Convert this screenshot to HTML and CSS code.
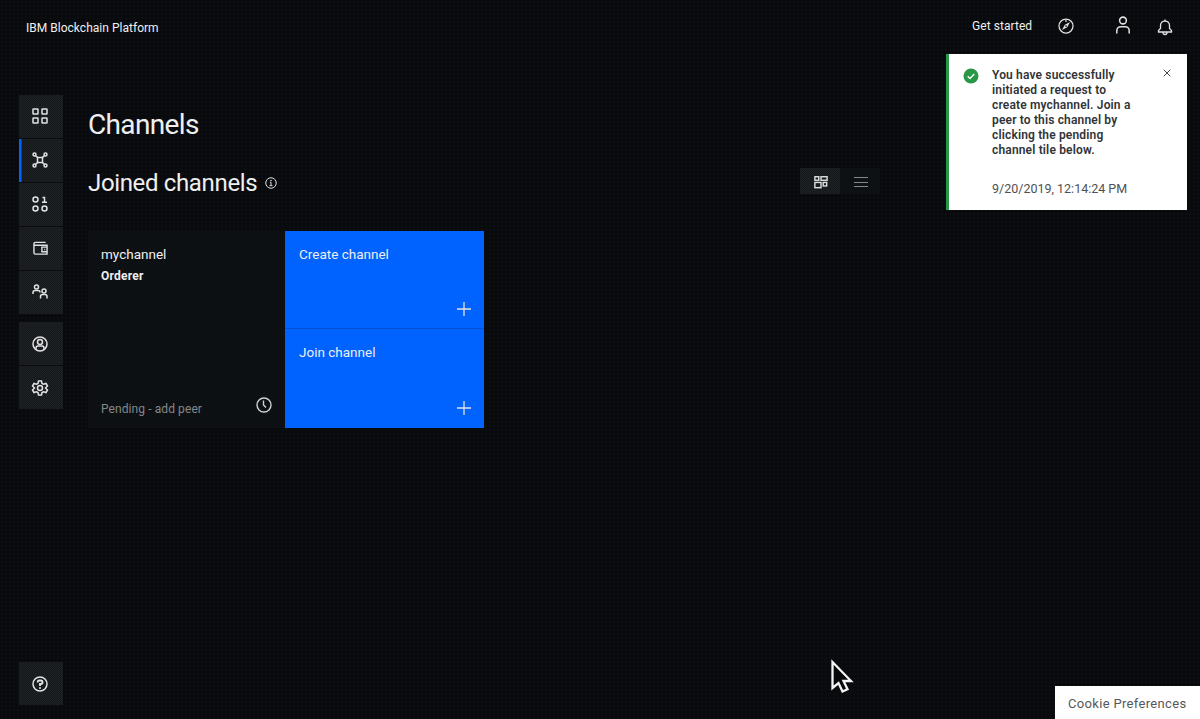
FILE: index.html
```html
<!DOCTYPE html>
<html lang="en">
<head>
<meta charset="utf-8">
<title>IBM Blockchain Platform</title>
<link rel="stylesheet" href="styles.css">
</head>
<body>
<div class="app">
  <header class="header">
    <span class="brand">IBM Blockchain Platform</span>
    <div class="header-actions">
      <span class="get-started">Get started</span>
      <svg class="icon compass" viewBox="0 0 32 32"><circle cx="16" cy="16" r="14"/><path class="solid" d="M24 8l-5.500 10.500L8 24l5.500-10.500z"/><circle class="hole" cx="16" cy="16" r="1.700"/><path d="M16 4v4"/></svg>
      <svg class="icon user" viewBox="0 0 32 32"><circle cx="16" cy="8" r="6"/><path d="M5 31v-5a7 7 0 0 1 7-7h8a7 7 0 0 1 7 7v5"/></svg>
      <svg class="icon bell" viewBox="0 0 32 32"><path d="M16 1v3M16 4a9 9 0 0 0-9 9v6l-4 4v3h26v-3l-4-4v-6a9 9 0 0 0-9-9zM12 26v1a4 4 0 0 0 8 0v-1"/></svg>
    </div>
  </header>

  <div class="body">
    <nav class="nav">
      <div class="nav-group">
        <a class="nav-item"><svg class="icon" viewBox="0 0 32 32"><rect x="2" y="2" width="10" height="10" rx="1"/><rect x="20" y="2" width="10" height="10" rx="1"/><rect x="2" y="20" width="10" height="10" rx="1"/><rect x="20" y="20" width="10" height="10" rx="1"/></svg></a>
        <a class="nav-item active"><svg class="icon" viewBox="0 0 32 32"><circle cx="5" cy="5" r="3"/><circle cx="27" cy="5" r="3"/><circle cx="5" cy="27" r="3"/><circle cx="27" cy="27" r="3"/><rect x="11" y="11" width="10" height="10"/><path d="M7 7l4 4M25 7l-4 4M7 25l4-4M25 25l-4-4"/></svg></a>
        <a class="nav-item"><svg class="icon" viewBox="0 0 32 32"><circle cx="7" cy="7" r="5"/><path d="M21 3h4v9M20 12.500h10"/><circle cx="7" cy="25" r="5"/><circle cx="25" cy="25" r="5"/></svg></a>
        <a class="nav-item"><svg class="icon wallet" viewBox="0 0 32 32"><path d="M27 3H5a3 3 0 0 0-3 3v19a3 3 0 0 0 3 3h25V9H3M30 13H19v10h11M24 18h2"/></svg></a>
        <a class="nav-item"><svg class="icon people" viewBox="0 0 32 32"><circle cx="9" cy="6" r="4"/><path d="M2 20v-3a4 4 0 0 1 4-4h6a4 4 0 0 1 4 4"/><circle cx="24" cy="14" r="4"/><path d="M17 29v-4a4 4 0 0 1 4-4h5a4 4 0 0 1 4 4v4"/></svg></a>
      </div>
      <div class="nav-group">
        <a class="nav-item"><svg class="icon" viewBox="0 0 32 32"><circle cx="16" cy="16" r="14"/><circle cx="16" cy="12" r="5"/><path d="M8 27v-3a4 4 0 0 1 4-4h8a4 4 0 0 1 4 4v3"/></svg></a>
        <a class="nav-item"><svg class="icon" viewBox="0 0 32 32"><path d="M13 2h6l1 5 3 1.500 5-1.500 3 5-4 4 4 4-3 5-5-1.500-3 1.500-1 5h-6l-1-5-3-1.500-5 1.500-3-5 4-4-4-4 3-5 5 1.500 3-1.500z"/><circle cx="16" cy="16" r="5"/></svg></a>
      </div>
      <a class="nav-item help"><svg class="icon" viewBox="0 0 32 32"><circle cx="16" cy="16" r="14"/><path class="thick" d="M11.500 13v-1a3 3 0 0 1 3-3h3a3.500 3.500 0 0 1 0 7H16v4"/><circle class="solid" cx="16" cy="24" r="2"/></svg></a>
    </nav>

    <main class="main">
      <h1 class="title">Channels</h1>
      <div class="section-head">
        <h2 class="subtitle">Joined channels</h2>
        <svg class="icon info" viewBox="0 0 32 32"><circle cx="16" cy="16" r="14"/><path d="M13 14h3v8M12 23h8"/><circle class="solid" cx="16" cy="9" r="2"/></svg>
        <div class="view-switch">
          <span class="view selected"><svg class="icon grid" viewBox="0 0 32 32"><rect x="2" y="4" width="9" height="8"/><rect x="16" y="4" width="14" height="8"/><rect x="2" y="17" width="14" height="12"/><rect x="21" y="17" width="8" height="8"/></svg></span>
          <span class="view"><svg class="icon list" viewBox="0 0 14 12"><path d="M0 1.500h14M0 6.500h14M0 10.500h14"/></svg></span>
        </div>
      </div>
      <div class="tiles">
        <article class="tile channel">
          <div class="tile-name">mychannel</div>
          <div class="tile-kind">Orderer</div>
          <div class="tile-foot">
            <span class="pending">Pending - add peer</span>
            <svg class="icon clock" viewBox="0 0 32 32"><circle cx="16" cy="16" r="14"/><path d="M15 7v9l5 5"/></svg>
          </div>
        </article>
        <div class="actions">
          <div class="tile action"><span>Create channel</span><svg class="icon plus" viewBox="0 0 14 14"><path d="M7 0v14M0 7h14"/></svg></div>
          <div class="tile action"><span>Join channel</span><svg class="icon plus" viewBox="0 0 14 14"><path d="M7 0v14M0 7h14"/></svg></div>
        </div>
      </div>
    </main>
  </div>

  <aside class="toast">
    <svg class="check" viewBox="0 0 16 16"><circle cx="8" cy="8" r="7.500"/><path d="M4.700 8.200l2.300 2.300 4.300-4.500"/></svg>
    <div class="toast-text">
      <p class="message">You have successfully<br>initiated a request to<br>create mychannel. Join a<br>peer to this channel by<br>clicking the pending<br>channel tile below.</p>
      <p class="time">9/20/2019, 12:14:24 PM</p>
    </div>
    <svg class="close" viewBox="0 0 8 8"><path d="M.7.7l6.600 6.600M7.300.7L.7 7.300"/></svg>
  </aside>
  <div class="cookies">Cookie Preferences</div>
  <svg class="cursor" viewBox="0 0 24 36"><path d="M2.500 3v26l6-5 4 8.500 5-2.300-4-8.200h7.500z"/></svg>
</div>
</body>
</html>
```
FILE: styles.css
```css
* { box-sizing: border-box; }
body { margin: 0; }
h1, h2, p { margin: 0; font-weight: 400; }

.app {
  position: relative;
  display: flex;
  flex-direction: column;
  width: 1200px;
  height: 719px;
  overflow: hidden;
  color: #eeeff0;
  font-family: Roboto, "Noto Sans", sans-serif;
  font-size: 12px;
  background: #090a0d radial-gradient(circle, #0f1114 0.5px, transparent 1px) 0 0 / 4px 4px;
}

.icon { display: block; width: 16px; height: 16px; fill: none; stroke: #e0e2e3; stroke-width: 3; overflow: visible; flex: none; }
.icon .solid { fill: #e0e2e3; stroke: none; }
.icon .hole { fill: #090a0d; stroke: none; }
.icon .thick { stroke-width: 3.8; }

.header { display: flex; align-items: flex-start; justify-content: space-between; height: 94px; padding: 0 27px 0 26px; flex: none; }
.brand { margin-top: 20px; line-height: 16px; letter-spacing: 0.02px; }
.header-actions { display: flex; align-items: flex-start; }
.get-started { width: 61px; margin: 18px 25px 0 0; line-height: 16px; letter-spacing: 0.06px; white-space: nowrap; }
.header .compass { margin: 18px 40px 0 0; stroke-width: 2.5; }
.header .user { width: 18px; height: 18px; margin: 16px 25px 0 0; stroke-width: 2.7; }
.header .bell { margin-top: 19px; stroke-width: 2.6; }

.body { display: flex; flex: 1; }
.nav { display: flex; flex-direction: column; width: 44px; margin-left: 19px; padding: 1px 0 14px; }
.nav-group { display: flex; flex-direction: column; gap: 1px; margin-bottom: 8px; }
.nav-item { display: flex; align-items: center; justify-content: center; height: 43px; padding: 0 2px 0 0; background: #171a1d repeating-conic-gradient(#1d2124 0 25%, #15191c 0 50%) 0 0 / 2px 2px; }
.nav-group:first-child .nav-item { padding-bottom: 1px; }
.nav-group + .nav-group .nav-item { padding-top: 1px; }
.nav-item.active { box-shadow: inset 2.5px 0 #0062ff; }
.help { margin-top: auto; padding-top: 1px; }
.nav .wallet { width: 15px; height: 15px; }

.main { width: 792px; margin-left: 25px; }
.title { margin-top: 13px; font-size: 28px; line-height: 36px; letter-spacing: -0.65px; }
.section-head { display: flex; align-items: center; height: 32px; margin-top: 24px; }
.subtitle { font-size: 24px; line-height: 32px; letter-spacing: -0.35px; }
.icon.info { width: 12px; height: 12px; margin-left: 8px; stroke-width: 2.6; }
.view-switch { display: flex; margin: -4px 0 0 auto; }
.view { display: flex; align-items: center; justify-content: center; width: 40px; height: 26px; padding: 2px 0 0 1px; background: #0d1013 repeating-conic-gradient(#111417 0 25%, #0b0e11 0 50%) 0 0 / 2px 2px; }
.view.selected { background: #171a1d repeating-conic-gradient(#1d2124 0 25%, #15191c 0 50%) 0 0 / 2px 2px; }
.icon.grid { width: 14px; height: 14px; stroke-width: 3.2; }
.icon.list { width: 14px; height: 12px; stroke: #85888a; stroke-width: 1; }

.tiles { display: flex; margin-top: 32px; }
.tile { display: flex; padding: 13px; font-size: 13.500px; }
.channel { flex-direction: column; width: 197px; height: 197px; background: #0c0f12 repeating-conic-gradient(#101417 0 25%, #0a0d10 0 50%) 0 0 / 2px 2px; }
.tile-name { line-height: 20px; }
.tile-kind { margin-top: 4px; font-size: 12px; font-weight: 700; line-height: 16px; letter-spacing: 0.25px; }
.tile-foot { display: flex; justify-content: space-between; align-items: flex-end; margin-top: auto; margin-bottom: -2px; font-size: 12px; color: #85888a; }
.pending { line-height: 16px; letter-spacing: 0.09px; }
.channel .clock { margin-bottom: 4px; stroke: #cfd1d2; stroke-width: 2.8; }
.actions { display: flex; flex-direction: column; gap: 1px; width: 199px; height: 197px; background: #0750d2; }
.action { height: 97px; justify-content: space-between; background: #0062ff; line-height: 20px; padding-left: 14px; }
.action + .action { height: 99px; }
.icon.plus { width: 14px; height: 14px; margin-bottom: -1px; stroke-width: 1.3; align-self: flex-end; }
.action + .action .plus { margin-bottom: 0; }

.toast { position: absolute; top: 54px; left: 946px; display: flex; align-items: flex-start; width: 241px; height: 156px; padding: 14px 16px 0 14px; color: #303437; background: #fff; border-left: 3px solid #2a9648; }
.check { width: 16px; height: 16px; flex: none; }
.check circle { fill: #2a9648; }
.check path { fill: none; stroke: #fff; stroke-width: 1.3; }
.toast-text { margin-left: 13px; white-space: nowrap; flex: 1; }
.message { font-size: 12px; font-weight: 600; line-height: 15px; letter-spacing: 0.16px; }
.time { margin-top: 22px; color: #4e5153; font-size: 12.500px; line-height: 18px; }
.close { width: 8px; height: 8px; margin-top: 1px; fill: none; stroke: #45484a; stroke-width: 1; }
.cookies { position: absolute; right: 0; bottom: 0; width: 145px; height: 33px; padding: 9px 0 0 13px; color: #55585a; background: #fff; font-size: 13px; line-height: 18px; letter-spacing: 0.33px; white-space: nowrap; }
.cursor { position: absolute; left: 830px; top: 659px; width: 24px; height: 36px; fill: #07080a; stroke: #f3f4f4; stroke-width: 2.3; }
```
